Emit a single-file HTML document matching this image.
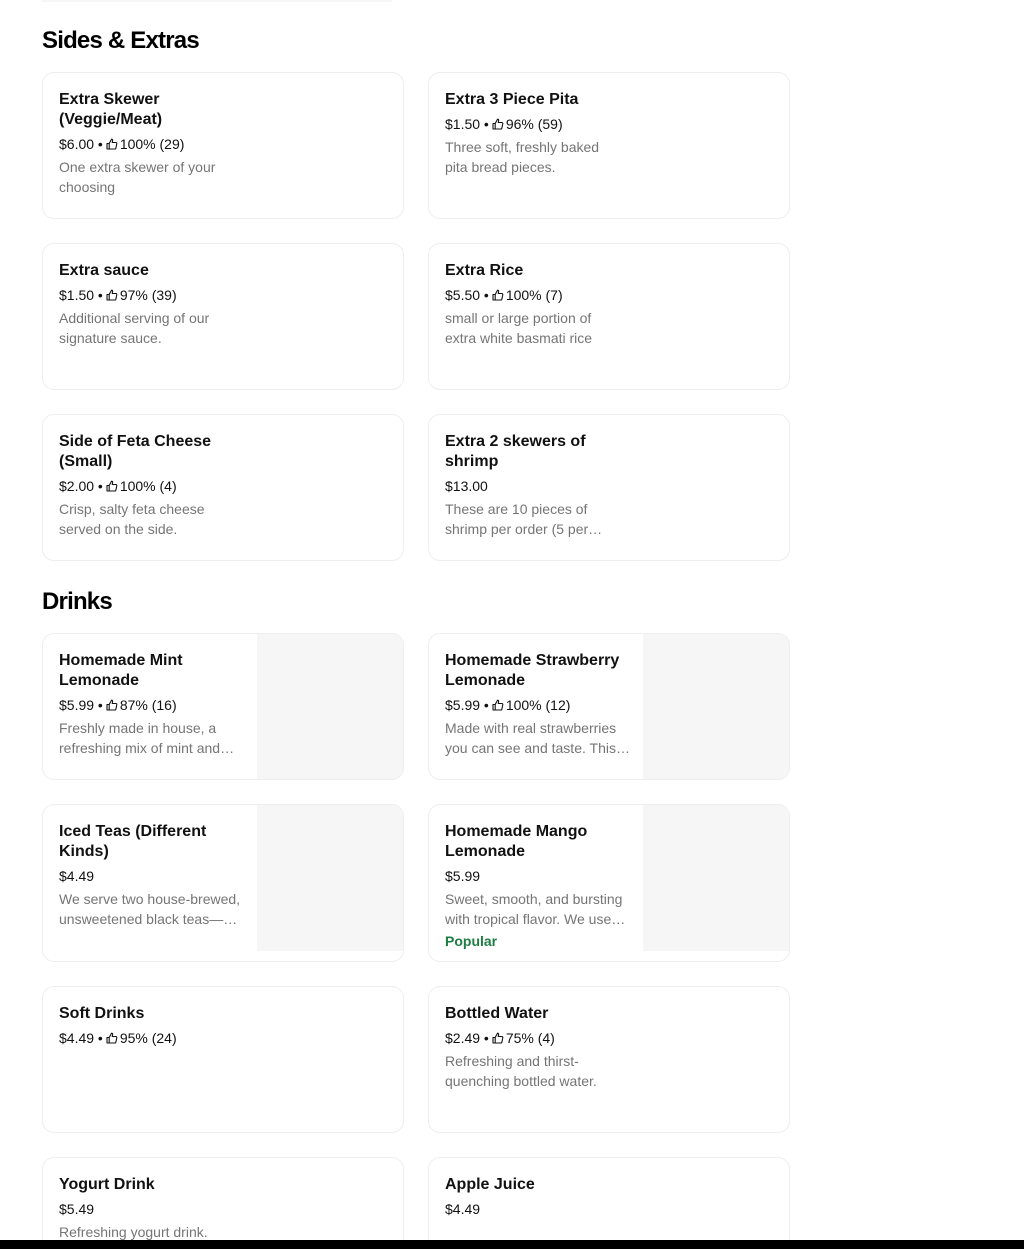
<!DOCTYPE html>
<html><head><meta charset="utf-8"><style>
*{margin:0;padding:0;box-sizing:border-box}
html,body{width:1024px;height:1249px;background:#fff;overflow:hidden;position:relative;font-family:"Liberation Sans",sans-serif;color:#000}
h2{position:absolute;left:42px;font-size:24px;font-weight:700;letter-spacing:-0.8px}
.c{position:absolute;width:362px;border:1px solid #eeeeee;border-radius:12px;overflow:hidden;background:#fff}
.in{position:absolute;left:16px;top:17px;width:190px}
.t{font-size:16px;line-height:20px;font-weight:600;color:#111}
.p{font-size:14px;line-height:18px;margin-top:5px;color:#111;display:flex;align-items:center;white-space:nowrap}
.d{font-size:14px;line-height:20px;margin-top:4px;color:#757575}
.n{width:172px}
.pop{font-size:14px;line-height:20px;color:#1e7d43;font-weight:600;margin-top:2px}
.img{position:absolute;right:0;top:0;width:146px;height:146px;background:#f6f6f6}
.ic{width:12px;height:12px;margin:0 2px 0 3px}
.line{position:absolute;left:42px;top:0;width:350px;height:2px;background:#f6f6f6}
.bar{position:absolute;left:0;top:1240px;width:1024px;height:9px;background:#000}
</style></head><body>
<div class="line"></div>
<h2 style="top:27px">Sides &amp; Extras</h2>
<svg width="0" height="0" style="position:absolute"><defs><symbol id="th" viewBox="0 0 12 12"><path d="M1 5.5h2.2v5.5H1zM3.2 5.5L5.5 1.2c.9 0 1.3.6 1.1 1.4L6.2 4.5h3.6c.7 0 1.1.6 1 1.2l-.9 4.4c-.1.5-.5.9-1 .9H3.2" fill="none" stroke="#111" stroke-width="1.1" stroke-linejoin="round"/></symbol></defs></svg>

<div class="c" style="left:42px;top:72px;height:147px"><div class="in"><div class="t">Extra Skewer (Veggie/Meat)</div><div class="p">$6.00 •<svg class="ic"><use href="#th"/></svg>100% (29)</div><div class="d n">One extra skewer of your choosing</div></div></div>
<div class="c" style="left:428px;top:72px;height:147px"><div class="in"><div class="t">Extra 3 Piece Pita</div><div class="p">$1.50 •<svg class="ic"><use href="#th"/></svg>96% (59)</div><div class="d n">Three soft, freshly baked pita bread pieces.</div></div></div>

<div class="c" style="left:42px;top:243px;height:147px"><div class="in"><div class="t">Extra sauce</div><div class="p">$1.50 •<svg class="ic"><use href="#th"/></svg>97% (39)</div><div class="d n">Additional serving of our signature sauce.</div></div></div>
<div class="c" style="left:428px;top:243px;height:147px"><div class="in"><div class="t">Extra Rice</div><div class="p">$5.50 •<svg class="ic"><use href="#th"/></svg>100% (7)</div><div class="d n">small or large portion of extra white basmati rice</div></div></div>

<div class="c" style="left:42px;top:414px;height:147px"><div class="in"><div class="t">Side of Feta Cheese (Small)</div><div class="p">$2.00 •<svg class="ic"><use href="#th"/></svg>100% (4)</div><div class="d n">Crisp, salty feta cheese served on the side.</div></div></div>
<div class="c" style="left:428px;top:414px;height:147px"><div class="in"><div class="t">Extra 2 skewers of shrimp</div><div class="p">$13.00</div><div class="d n">These are 10 pieces of shrimp per order (5 per…</div></div></div>

<h2 style="top:588px">Drinks</h2>

<div class="c" style="left:42px;top:633px;height:147px"><div class="img"></div><div class="in"><div class="t">Homemade Mint Lemonade</div><div class="p">$5.99 •<svg class="ic"><use href="#th"/></svg>87% (16)</div><div class="d">Freshly made in house, a refreshing mix of mint and…</div></div></div>
<div class="c" style="left:428px;top:633px;height:147px"><div class="img"></div><div class="in"><div class="t">Homemade Strawberry Lemonade</div><div class="p">$5.99 •<svg class="ic"><use href="#th"/></svg>100% (12)</div><div class="d">Made with real strawberries you can see and taste. This…</div></div></div>

<div class="c" style="left:42px;top:804px;height:158px"><div class="img"></div><div class="in"><div class="t">Iced Teas (Different Kinds)</div><div class="p">$4.49</div><div class="d">We serve two house-brewed, unsweetened black teas—…</div></div></div>
<div class="c" style="left:428px;top:804px;height:158px"><div class="img"></div><div class="in"><div class="t">Homemade Mango Lemonade</div><div class="p">$5.99</div><div class="d">Sweet, smooth, and bursting with tropical flavor. We use…</div><div class="pop">Popular</div></div></div>

<div class="c" style="left:42px;top:986px;height:147px"><div class="in"><div class="t">Soft Drinks</div><div class="p">$4.49 •<svg class="ic"><use href="#th"/></svg>95% (24)</div></div></div>
<div class="c" style="left:428px;top:986px;height:147px"><div class="in"><div class="t">Bottled Water</div><div class="p">$2.49 •<svg class="ic"><use href="#th"/></svg>75% (4)</div><div class="d n">Refreshing and thirst-quenching bottled water.</div></div></div>

<div class="c" style="left:42px;top:1157px;height:147px"><div class="in"><div class="t">Yogurt Drink</div><div class="p">$5.49</div><div class="d">Refreshing yogurt drink.</div></div></div>
<div class="c" style="left:428px;top:1157px;height:147px"><div class="in"><div class="t">Apple Juice</div><div class="p">$4.49</div></div></div>

<div class="bar"></div>
</body></html>
